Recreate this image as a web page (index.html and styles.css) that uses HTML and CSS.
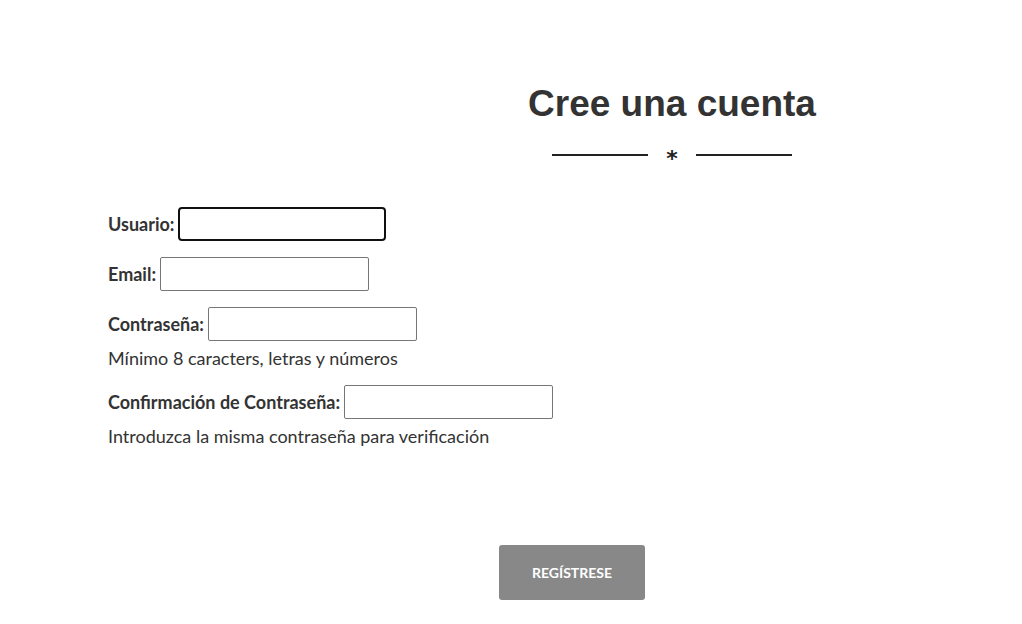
FILE: index.html
```html
<!DOCTYPE html>
<html lang="es">
<head>
    <meta charset="UTF-8">
    <meta name="viewport" content="width=device-width, initial-scale=1.0">
    <title>Cree una cuenta</title>
    <link rel="stylesheet" href="styles.css">
</head>
<body>
    <div class="page">
        <div class="page-header">
            <h1>Cree una cuenta</h1>
            <div class="divider">
                <span class="divider-line"></span>
                <span class="divider-star">*</span>
                <span class="divider-line"></span>
            </div>
        </div>

        <form class="signup-form" action="#" method="post">
            <div class="field">
                <div class="field-row">
                    <label for="id_username">Usuario:</label>
                    <input type="text" id="id_username" class="text-input active" autofocus>
                </div>
            </div>
            <div class="field">
                <div class="field-row">
                    <label for="id_email">Email:</label>
                    <input type="email" id="id_email" class="text-input">
                </div>
            </div>
            <div class="field">
                <div class="field-row">
                    <label for="id_password1">Contraseña:</label>
                    <input type="password" id="id_password1" class="text-input">
                </div>
                <p class="help-text">Mínimo 8 caracters, letras y números</p>
            </div>
            <div class="field">
                <div class="field-row">
                    <label for="id_password2">Confirmación de Contraseña:</label>
                    <input type="password" id="id_password2" class="text-input">
                </div>
                <p class="help-text">Introduzca la misma contraseña para verificación</p>
            </div>

            <div class="form-actions">
                <button type="submit" class="submit-button">Regístrese</button>
            </div>
        </form>
    </div>
</body>
</html>
```

FILE: styles.css
```css
* {
    margin: 0;
    padding: 0;
    box-sizing: border-box;
}

body {
    font-family: Lato, 'Open Sans', sans-serif;
    font-size: 18px;
    color: #333;
    background: #fff;
}

.page-header {
    padding: 82px 0 0 322px;
    text-align: center;
}

.page-header h1 {
    font-family: 'Liberation Sans', Arial, sans-serif;
    font-size: 37px;
    line-height: 44px;
    font-weight: bold;
    color: #333;
}

.divider {
    display: flex;
    justify-content: center;
    align-items: center;
    height: 20px;
    margin-top: 19px;
}

.divider-line {
    width: 96px;
    height: 2px;
    background: #222;
}

.divider-star {
    width: 48px;
    text-align: center;
    font-family: 'DejaVu Sans', sans-serif;
    font-size: 22px;
    font-weight: bold;
    line-height: 20px;
    padding-top: 7px;
    color: #222;
}

.signup-form {
    padding: 42px 0 0 108px;
}

.field {
    margin-bottom: 16px;
}

.field-row {
    display: flex;
    align-items: center;
    gap: 4px;
    height: 34px;
}

.field-row label {
    font-weight: bold;
    color: #333;
}

.text-input {
    width: 209px;
    height: 34px;
    border: 1px solid #767676;
    border-radius: 2px;
    font-family: inherit;
    font-size: 16px;
    padding: 0 4px;
    background: #fff;
}

.text-input.active {
    width: 208px;
    border: 2px solid #101010;
    border-radius: 4px;
    outline: none;
    caret-color: #000;
}

.text-input:focus {
    outline: none;
}

.help-text {
    margin-top: 6px;
    line-height: 22px;
    color: #333;
}

.form-actions {
    margin-top: 98px;
    padding-left: 391px;
}

.submit-button {
    width: 146px;
    height: 55px;
    background: #888;
    color: #fff;
    border: none;
    border-radius: 3px;
    font-family: Lato, sans-serif;
    font-size: 14px;
    font-weight: bold;
    text-transform: uppercase;
    cursor: pointer;
}
```
